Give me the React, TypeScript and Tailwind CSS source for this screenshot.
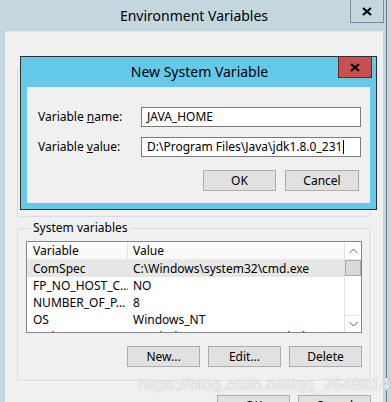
import React from "react";

const rows = [
  { name: "ComSpec", value: "C:\\Windows\\system32\\cmd.exe", selected: true },
  { name: "FP_NO_HOST_C...", value: "NO" },
  { name: "NUMBER_OF_P...", value: "8" },
  { name: "OS", value: "Windows_NT" },
  { name: "Path", value: "C:\\Windows\\system32;C:\\Windows;C:\\Windows\\System32\\Wbem;" },
];

function WinButton({ children, className = "" }: { children: React.ReactNode; className?: string }) {
  return (
    <div
      className={`h-[21px] w-[73px] shrink-0 flex items-center justify-center bg-[#e1e1e1] border border-[#adadad] text-[12px] text-black ${className}`}
    >
      {children}
    </div>
  );
}

function CloseGlyph() {
  return (
    <svg width="10" height="9" viewBox="0 0 10 9">
      <path d="M1 1L9 8M9 1L1 8" stroke="#000" strokeWidth="2.2" />
    </svg>
  );
}

function Chevron({ up }: { up?: boolean }) {
  return (
    <svg width="9" height="6" viewBox="0 0 9 6">
      <path d={up ? "M0.5 5L4.5 1L8.5 5" : "M0.5 1L4.5 5L8.5 1"} stroke="#606060" strokeWidth="1" fill="none" />
    </svg>
  );
}

export default function App() {
  return (
    <div
      className="relative w-[391px] h-[402px] overflow-hidden bg-[#c4d7de] text-black"
      style={{ fontFamily: '"Noto Sans", "Open Sans", sans-serif' }}
    >
      {/* Outer window */}
      <div className="w-[387px] h-[402px] border-r border-[#6b7a82] flex flex-col">
        {/* Title bar */}
        <div className="h-[31px] shrink-0 flex items-center relative">
          <div className="flex-1 text-center text-[14px] pl-[2px] leading-none">Environment Variables</div>
          <div className="absolute right-[2px] -top-[1px] w-[34px] h-[24px] border border-[#7f8c93] flex items-center justify-center">
            <CloseGlyph />
          </div>
        </div>

        {/* Client */}
        <div className="ml-[5px] mr-[3px] flex-1 min-w-0 bg-[#f0f0f0] border-t border-[#dde5e9] px-[12px] pt-[27px] flex flex-col">
          <fieldset className="h-[158px] min-w-0 border border-[#dcdcdc] rounded-[3px] px-[8px]">
            <legend className="ml-[5px] px-[2px] text-[12px] text-[#1e395b]">User variables for Administrator</legend>
          </fieldset>

          <fieldset className="mt-[3px] min-w-0 border border-[#dcdcdc] rounded-[3px] shadow-[1px_1px_0_#fff] px-[8px] pb-[13px]">
            <legend className="ml-[5px] px-[2px] text-[12px] leading-[16px]">System variables</legend>

            <div className="mt-[5px] h-[92px] min-w-0 border border-[#828790] bg-white flex overflow-hidden">
              <div className="flex-1 min-w-0 flex flex-col overflow-hidden text-[12px]">
                <div className="h-[18px] shrink-0 flex bg-gradient-to-b from-white to-[#f7f7f7] border-b border-[#ebebeb]">
                  <div className="w-[101px] shrink-0 pl-[6px] border-r border-[#e5e5e5] leading-[18px]">Variable</div>
                  <div className="flex-1 pl-[5px] leading-[18px]">Value</div>
                </div>
                {rows.map((r) => (
                  <div
                    key={r.name}
                    className={`h-[17px] shrink-0 flex leading-[17px] whitespace-nowrap ${r.selected ? "bg-[#e6e6e6]" : ""}`}
                  >
                    <div className="w-[101px] shrink-0 pl-[6px] overflow-hidden">{r.name}</div>
                    <div className="flex-1 min-w-0 pl-[5px] overflow-hidden">{r.value}</div>
                  </div>
                ))}
              </div>
              <div className="w-[17px] shrink-0 border-l border-[#e3e3e3] bg-white flex flex-col">
                <div className="h-[18px] flex items-center justify-center border-b border-[#e3e3e3]">
                  <Chevron up />
                </div>
                <div className="h-[16px] bg-[#dadada] border border-[#a9a9a9]" />
                <div className="flex-1" />
                <div className="h-[17px] flex items-center justify-center border-t border-[#e3e3e3]">
                  <Chevron />
                </div>
              </div>
            </div>

            <div className="mt-[13px] flex justify-end gap-[8px]">
              <WinButton>New...</WinButton>
              <WinButton>Edit...</WinButton>
              <WinButton>Delete</WinButton>
            </div>
          </fieldset>

          <div className="mt-[14px] flex justify-end gap-[8px]">
            <WinButton>OK</WinButton>
            <WinButton>Cancel</WinButton>
          </div>
        </div>
      </div>

      {/* New System Variable dialog */}
      <div className="absolute left-[20px] top-[56px] w-[357px] h-[154px] border border-[#2f2f2f] bg-[#65c9ea] flex flex-col">
        <div className="h-[30px] shrink-0 flex items-center relative">
          <div className="flex-1 text-center text-[14px] leading-none pl-[2px]">New System Variable</div>
          <div className="absolute right-[4px] top-0 w-[34px] h-[21px] bg-[#c75050] border border-[#5a2a2a] border-t-0 flex items-center justify-center">
            <CloseGlyph />
          </div>
        </div>
        <div className="mx-[6px] mb-[6px] flex-1 bg-[#f0f0f0] pl-[11px] pr-[9px] pt-[20px] text-[12px]">
          <div className="flex items-center h-[20px]">
            <div className="w-[103px]">
              Variable <u>n</u>ame:
            </div>
            <div className="flex-1 h-[20px] border border-[#7a7a7a] bg-white pl-[5px] leading-[18px]">JAVA_HOME</div>
          </div>
          <div className="flex items-center h-[20px] mt-[10px]">
            <div className="w-[103px]">
              Variable <u>v</u>alue:
            </div>
            <div className="flex-1 h-[20px] border border-[#7a7a7a] bg-white pl-[5px] leading-[18px] flex items-center">
              D:\Program Files\Java\jdk1.8.0_231
              <span className="inline-block w-[1px] h-[14px] bg-black ml-[1px]" />
            </div>
          </div>
          <div className="mt-[13px] flex justify-end gap-[9px] pr-[2px]">
            <WinButton>OK</WinButton>
            <WinButton className="w-[74px]">Cancel</WinButton>
          </div>
        </div>
      </div>

      {/* Watermark */}
      <div
        className="absolute left-[138px] top-[372px] text-[17px] text-white/85 [text-shadow:0_0_1px_#9a9a9a] whitespace-nowrap"
        style={{ fontFamily: '"Liberation Sans", Arial, sans-serif' }}
      >
        https://blog.csdn.net/qq_26489147
      </div>
    </div>
  );
}
